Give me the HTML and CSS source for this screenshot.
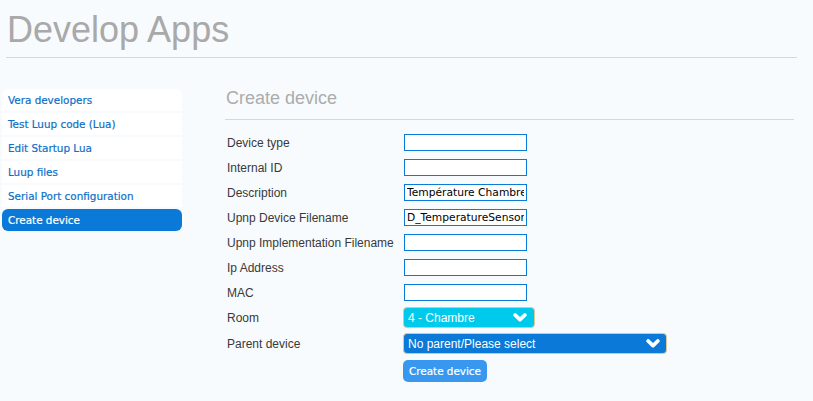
FILE: index.html
```html
<!DOCTYPE html>
<html>
<head>
<meta charset="utf-8">
<title>Develop Apps</title>
<link rel="stylesheet" href="styles.css">
</head>
<body>
<header class="header">
  <h1 class="title">Develop Apps</h1>
</header>
<div class="layout">
  <nav class="sidebar">
    <a class="nav-item first">Vera developers</a>
    <a class="nav-item">Test Luup code (Lua)</a>
    <a class="nav-item">Edit Startup Lua</a>
    <a class="nav-item">Luup files</a>
    <a class="nav-item">Serial Port configuration</a>
    <a class="nav-item active">Create device</a>
  </nav>
  <main class="main">
    <h2 class="heading">Create device</h2>
    <form class="form">
      <div class="fields">
        <div class="row"><span class="label">Device type</span><input class="text" type="text" value=""></div>
        <div class="row"><span class="label">Internal ID</span><input class="text" type="text" value=""></div>
        <div class="row"><span class="label">Description</span><input class="text" type="text" value="Température Chambre"></div>
        <div class="row"><span class="label">Upnp Device Filename</span><input class="text" type="text" value="D_TemperatureSensor1.xml"></div>
        <div class="row"><span class="label">Upnp Implementation Filename</span><input class="text" type="text" value=""></div>
        <div class="row"><span class="label">Ip Address</span><input class="text" type="text" value=""></div>
        <div class="row"><span class="label">MAC</span><input class="text" type="text" value=""></div>
      </div>
      <div class="selects">
        <div class="row"><span class="label">Room</span>
          <div class="select select-room"><span>4 - Chambre</span>
            <svg class="chev" width="14" height="9" viewBox="0 0 14 9"><polyline points="2.2,2 7,6.6 11.8,2" fill="none" stroke="#fff" stroke-width="3.8" stroke-linecap="round" stroke-linejoin="round"/></svg>
          </div>
        </div>
        <div class="row"><span class="label">Parent device</span>
          <div class="select select-parent"><span>No parent/Please select</span>
            <svg class="chev" width="14" height="9" viewBox="0 0 14 9"><polyline points="2.2,2 7,6.6 11.8,2" fill="none" stroke="#fff" stroke-width="3.8" stroke-linecap="round" stroke-linejoin="round"/></svg>
          </div>
        </div>
      </div>
      <div class="actions">
        <button class="button" type="button">Create device</button>
      </div>
    </form>
  </main>
</div>
</body>
</html>
```
FILE: styles.css
```css
html, body {
  margin: 0;
  padding: 0;
  background: #f7fbfd;
}
body {
  font-family: "Liberation Sans", Arial, sans-serif;
  width: 813px;
  height: 401px;
  overflow: hidden;
}
.header {
  margin: 0 16px 0 6px;
  padding-bottom: 9px;
  border-bottom: 1px solid #d3d8db;
}
.title {
  margin: 0;
  padding-top: 12px;
  padding-left: 1px;
  font-size: 36px;
  line-height: 36px;
  font-weight: normal;
  color: #a9a9a9;
}
.layout {
  display: flex;
  align-items: flex-start;
  margin-top: 29px;
}
.sidebar {
  margin-left: 2px;
  margin-top: 2px;
  width: 180px;
  display: flex;
  flex-direction: column;
  gap: 2px;
}
.nav-item {
  display: block;
  height: 22px;
  line-height: 23px;
  padding-left: 6px;
  background: #ffffff;
  color: #0d6fc8;
  font-family: "DejaVu Sans", sans-serif;
  font-size: 10.4px;
  -webkit-text-stroke: 0.2px currentColor;
  white-space: nowrap;
}
.nav-item.first {
  border-radius: 6px 6px 0 0;
}
.nav-item.active {
  background: #0a79d8;
  color: #ffffff;
  border-radius: 6px;
}
.main {
  margin-left: 43px;
  width: 569px;
}
.heading {
  margin: 0;
  padding-left: 1px;
  padding-bottom: 10px;
  font-size: 18px;
  line-height: 22px;
  font-weight: normal;
  color: #acacac;
  border-bottom: 1px solid #d3d8db;
}
.form {
  margin: 14px 0 0 0;
  padding-left: 2px;
}
.fields {
  display: flex;
  flex-direction: column;
  gap: 8px;
}
.row {
  display: flex;
  align-items: center;
}
.label {
  width: 177px;
  flex: none;
  font-size: 12px;
  color: #393939;
  white-space: nowrap;
}
.text {
  box-sizing: border-box;
  width: 123px;
  height: 17px;
  margin: 0;
  padding: 0 2px;
  border: 1px solid #0a7bd8;
  border-radius: 0;
  background: #ffffff;
  font-family: "DejaVu Sans", sans-serif;
  font-size: 10.7px;
  line-height: 15px;
  color: #000000;
  outline: none;
}
.selects {
  margin-top: 6px;
  display: flex;
  flex-direction: column;
  gap: 5px;
}
.select {
  box-sizing: border-box;
  height: 21px;
  margin-left: -1px;
  display: flex;
  align-items: center;
  justify-content: space-between;
  padding: 0 7px 0 4px;
  border: 1px solid #dcc796;
  border-radius: 4px;
  color: #ffffff;
  font-size: 12px;
}
.select-room {
  width: 132px;
  padding-right: 7px;
  background: #00caec;
}
.select-parent {
  width: 264px;
  padding-right: 6px;
  background: #0a79d8;
}
.chev {
  display: block;
}
.actions {
  margin-top: 6px;
  padding-left: 176px;
}
.button {
  box-sizing: border-box;
  width: 84px;
  height: 22px;
  margin: 0;
  padding: 0;
  border: none;
  border-radius: 5px;
  background: #3898ef;
  color: #ffffff;
  font-family: "DejaVu Sans", sans-serif;
  font-size: 10.4px;
  -webkit-text-stroke: 0.2px currentColor;
  text-align: center;
}
```
